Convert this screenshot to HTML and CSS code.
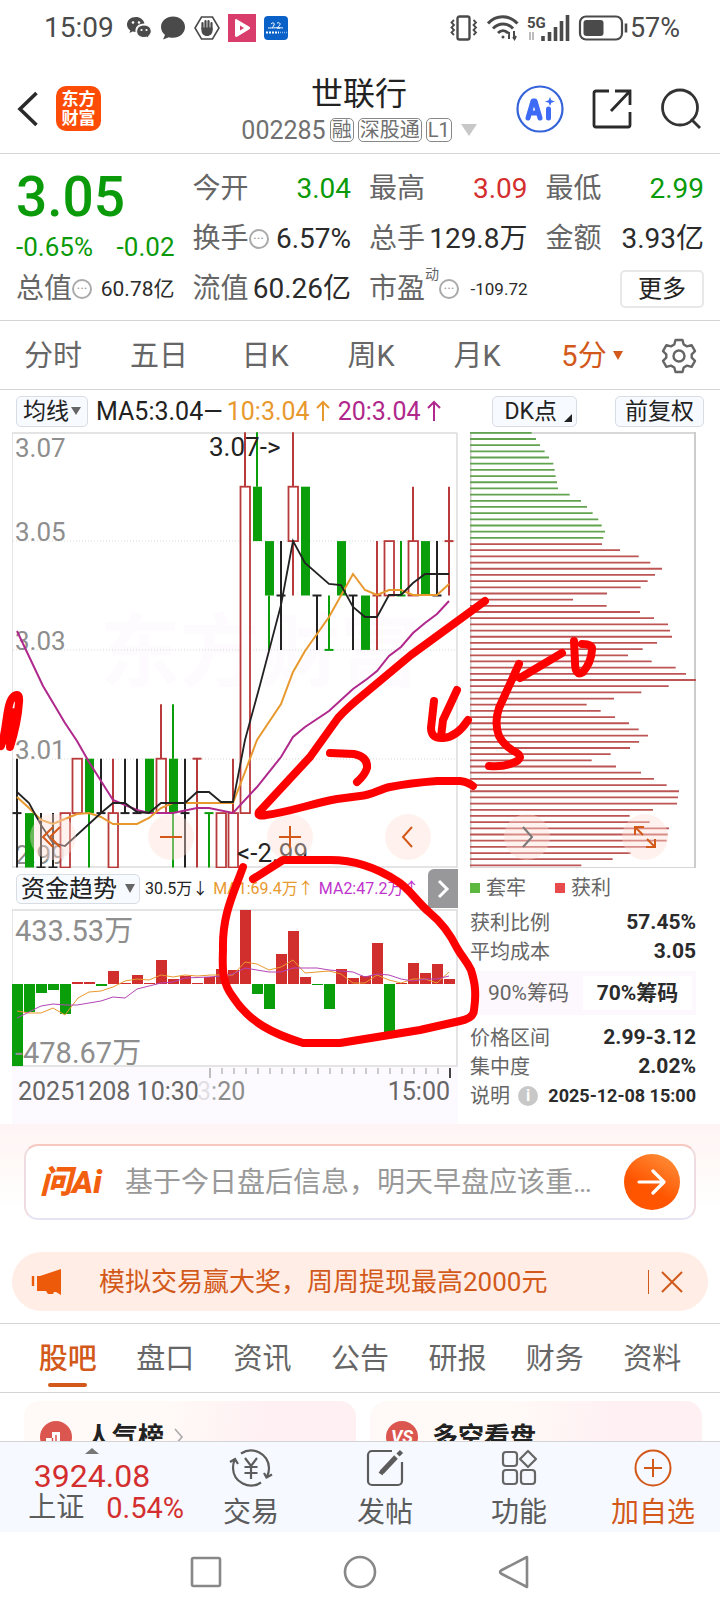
FILE: index.html
```html
<!DOCTYPE html>
<html lang="zh-CN">
<head>
<meta charset="utf-8">
<meta name="viewport" content="width=device-width, initial-scale=1">
<title>世联行 002285</title>
<link rel="stylesheet" href="styles.css">
</head>
<body>
<div class="status">
  <span class="clock">15:09</span>
  <svg width="26" height="26" viewBox="0 0 26 26" fill="#4a4a4a"><path d="M10 2C4.500 2 1 5.500 1 9.500c0 2.500 1.300 4.500 3.300 6L3.500 18l3-1.500c1 .3 2 .5 3 .5C9 12 12 8.500 18.500 8.500 17.500 4.500 14 2 10 2z"/><path d="M18 10c-4.300 0-7.300 2.800-7.300 6.300s3 6.200 7.300 6.200c.9 0 1.800-.2 2.600-.4l2.400 1.400-.7-2.200c1.700-1.200 2.900-3 2.900-5 0-3.500-3-6.300-7.200-6.300z" stroke="#fff" stroke-width="1"/><g fill="#fff"><circle cx="7" cy="7.500" r="1.300"/><circle cx="13" cy="7.500" r="1.300"/><circle cx="15.500" cy="15" r="1.100"/><circle cx="20.500" cy="15" r="1.100"/></g></svg>
  <svg width="26" height="26" viewBox="0 0 26 26" fill="#4a4a4a"><path d="M13 1.500C6.500 1.500 1 6 1 12c0 3.300 1.600 6 4 8L3 24.500l6-2.300c1.300.4 2.600.6 4 .6 6.700 0 12-4.800 12-10.800S19.700 1.500 13 1.500z"/></svg>
  <svg width="26" height="26" viewBox="0 0 26 26"><path d="M7.500 2h11L25 13l-6.500 11h-11L1 13z" fill="none" stroke="#4a4a4a" stroke-width="1.600"/><path d="M8.500 8v6M11.500 6v8M14.500 6v8M17.500 8v7" stroke="#4a4a4a" stroke-width="2.200" stroke-linecap="round"/><path d="M7.500 12.500h11v3c0 3-2 5.500-5.500 5.500s-5.500-2.500-5.500-5.500z" fill="#4a4a4a"/></svg>
  <svg width="28" height="28" viewBox="0 0 28 28"><rect width="28" height="28" fill="#d93d6c"/><path d="M9 5.500c-1.500-1-2 0-2 1.500v14c0 2 1 2.500 2.500 1.500L21 15.500c1.500-1 1.500-2 0-3z" fill="#fff"/><path d="M12 11.500l4 2.500-4 2.500z" fill="#d93d6c"/></svg>
  <svg width="24" height="24" viewBox="0 0 24 24"><rect width="24" height="24" rx="4" fill="#0a62c9"/><path d="M7 8c2-2 4-1 3 1s-2 3-1 3M13 7c3-1 4 1 2 3s-3 3 1 2M4 12c4 0 12-.5 15 0" fill="none" stroke="#fff"/><path d="M2 16.500h13" stroke="#fff" stroke-width="2" stroke-dasharray="2 1"/><path d="M16 16.500h7" stroke="#8bb8ee" stroke-width="1.500" stroke-dasharray="1 1"/></svg>
  <span class="grow"></span>
  <svg width="30" height="26" viewBox="0 0 30 26" fill="none" stroke="#4a4a4a"><rect x="8.500" y="1.500" width="12" height="23" rx="2" stroke-width="2.400"/><path d="M5 5L2.500 7.500 5 10l-2.500 2.500L5 15l-2.500 2.500L5 20M24.500 5L27 7.500 24.500 10l2.500 2.500L24.500 15l2.500 2.500L24.500 20" stroke-width="1.800"/></svg>
  <svg width="32" height="26" viewBox="0 0 32 26" fill="none" stroke="#4a4a4a" stroke-width="3"><path d="M1 8.500C9-.5 22-.5 30.500 8.500M6 13.500c6-6 14.500-6 20 0M11 18c3-3 7-3 10 0"/><circle cx="16" cy="22" r="1.500" fill="#4a4a4a" stroke="none"/><path d="M22 24v-7M21 19l1.500-2M27 16v8M26 22l1.500 2 1.500-3" stroke-width="2"/></svg>
  <svg class="signal" width="43" height="28" viewBox="0 -1 43 28"><text x="0" y="13" class="g5">5G</text><path d="M3 17v8M6 17v8" stroke="#bbb" stroke-width="2"/><path d="M16 21v5M22.500 17v9M28.500 12v14M34.500 6v20M40.500 0v26" stroke="#4a4a4a" stroke-width="3.600"/></svg>
  <svg width="50" height="26" viewBox="0 0 50 26" fill="none"><rect x="2" y="1.500" width="42" height="23" rx="6" stroke="#4a4a4a" stroke-width="2.200"/><rect x="5.500" y="5" width="20" height="16" rx="3" fill="#4a4a4a"/><path d="M48 8.500v9" stroke="#4a4a4a" stroke-width="2.600"/></svg>
  <span class="percent">57%</span>
</div>

<header class="head">
  <div class="head-side">
    <button class="plain" aria-label="返回"><svg width="24" height="40" viewBox="0 0 24 40"><path d="M20.500 4L4 20l16.500 16" fill="none" stroke="#2a2a2a" stroke-width="3.600"/></svg></button>
    <span class="logo">东方<br>财富</span>
  </div>
  <div class="head-mid">
    <h1>世联行</h1>
    <div class="code">002285<span class="badge">融</span><span class="badge">深股通</span><span class="badge">L1</span><svg width="16" height="12" viewBox="0 0 16 12"><path d="M0 0h16L8 12z" fill="#c8c8c8"/></svg></div>
  </div>
  <div class="head-side right">
    <button class="plain" aria-label="Ai"><svg width="48" height="48" viewBox="0 0 48 48"><circle cx="24" cy="24" r="22.500" fill="none" stroke="#3563d9" stroke-width="2.200"/><g fill="none" stroke="#3d6bf5" stroke-width="5" stroke-linejoin="round" stroke-linecap="round"><path d="M12 33l5-17h2l5 17M15 28h7"/><path d="M32.500 24v9"/></g><path d="M34 12l1.300 3.200L39 16.500l-3.700 1.300L34 21l-1.300-3.200-3.700-1.300 3.700-1.300z" fill="#3d6bf5"/></svg></button>
    <button class="plain" aria-label="分享"><svg width="40" height="40" viewBox="0 0 40 40" fill="none" stroke="#2a2a2a" stroke-width="2.800"><path d="M17 2H4a2 2 0 0 0-2 2v32a2 2 0 0 0 2 2h32a2 2 0 0 0 2-2V23M23 2h15v14M38 2L19 22"/></svg></button>
    <button class="plain" aria-label="搜索"><svg width="42" height="42" viewBox="0 0 42 42" fill="none" stroke="#333" stroke-width="2.800"><circle cx="20" cy="19.500" r="17.500"/><path d="M31 31l9 9"/></svg></button>
  </div>
</header>

<section class="quote">
  <div class="q-col">
    <strong class="price">3.05</strong>
    <div class="change"><span>-0.65%</span><span>-0.02</span></div>
    <div class="q"><span class="k">总值<i class="dots">···</i></span><span class="v mid">60.78亿</span></div>
  </div>
  <div class="q-col">
    <div class="q"><span class="k">今开</span><span class="v down">3.04</span></div>
    <div class="q"><span class="k">换手<i class="dots">···</i></span><span class="v">6.57%</span></div>
    <div class="q"><span class="k">流值</span><span class="v">60.26亿</span></div>
  </div>
  <div class="q-col">
    <div class="q"><span class="k">最高</span><span class="v up">3.09</span></div>
    <div class="q"><span class="k">总手</span><span class="v">129.8万</span></div>
    <div class="q"><span class="k">市盈<sup>动</sup><i class="dots">···</i></span><span class="v small">-109.72</span></div>
  </div>
  <div class="q-col">
    <div class="q"><span class="k">最低</span><span class="v down">2.99</span></div>
    <div class="q"><span class="k">金额</span><span class="v">3.93亿</span></div>
    <div class="q end"><button class="more">更多</button></div>
  </div>
</section>

<nav class="periods">
  <button class="plain">分时</button>
  <button class="plain">五日</button>
  <button class="plain">日K</button>
  <button class="plain">周K</button>
  <button class="plain">月K</button>
  <button class="plain on">5分<svg width="10" height="10" viewBox="0 0 10 10"><path d="M0 0h10L5 9z" fill="#d2591a"/></svg></button>
  <button class="plain" aria-label="设置"><svg width="36" height="36" viewBox="0 0 36 36" fill="none" stroke="#666" stroke-width="2.400" stroke-linejoin="round"><path d="M14.500 2h7l1.200 4.500 3.300 1.900 4.600-1.300 3.400 6-3.300 3.200v3.400l3.300 3.200-3.400 6-4.600-1.300-3.300 1.900L21.500 34h-7l-1.200-4.500-3.300-1.900-4.600 1.300-3.400-6 3.300-3.200v-3.400L2 13.100l3.400-6L10 8.400l3.300-1.900z"/><circle cx="18" cy="18" r="5.500"/></svg></button>
</nav>

<main class="market">
  <div class="tools">
    <button class="pill">均线<svg width="10" height="8" viewBox="0 0 10 8"><path d="M0 0h10L5 8z" fill="#666"/></svg></button>
    <span class="ma">MA5:3.04—</span><span class="ma or">10:3.04<svg width="14" height="22" viewBox="0 0 14 22"><path d="M7 21V2M1 8l6-6 6 6" fill="none" stroke="currentColor" stroke-width="2"/></svg></span><span class="ma pu">20:3.04<svg width="14" height="22" viewBox="0 0 14 22"><path d="M7 21V2M1 8l6-6 6 6" fill="none" stroke="currentColor" stroke-width="2"/></svg></span>
    <span class="grow"></span>
    <button class="pill dk">DK点<svg width="8" height="8" viewBox="0 0 8 8"><path d="M8 0v8H0z" fill="#222"/></svg></button>
    <button class="pill">前复权</button>
  </div>

  <div class="boards">
    <div class="board">
      <svg class="plot" id="candles" viewBox="12 432 446 436">
        <text x="100" y="680" class="mark">东方财富</text>
        <path d="M13 541h444M13 650h444M13 759h444" stroke="#d9d9d9" stroke-dasharray="1 2"/>
        <path d="M12 433h445M457 433v435M12 867h445M12 433v435" fill="none" stroke="#dcdcdc" stroke-width="1.500"/>
        <g class="axis"><text x="15" y="457">3.07</text><text x="15" y="541">3.05</text><text x="15" y="650">3.03</text><text x="15" y="759">3.01</text><text x="15" y="864">2.99</text></g>
        <g id="candle-layer"></g>
        <g fill="none" stroke-width="1.500">
          <path stroke="#b0288c" stroke-width="2" d="M17 631L43 686 65 723 77 741 89 762 113 800 137 810 149 813 173 813 197 808 209 808 233 813 257 787 281 757 293 737 305 727 329 711 353 689 367 679 377 671 389 656 401 647 413 633 425 623 437 614 449 601"/>
          <path stroke="#e8992e" stroke-width="2" d="M17 797L29 808 41 820 53 824 65 819 77 814 89 813 101 817 113 824 137 824 149 818 161 808 173 803 233 803 245 772 257 740 269 722 281 704 293 672 305 651 329 617 353 574 365 590 377 595 389 590 401 590 413 595 437 595 449 584"/>
          <path stroke="#222" stroke-width="1.800" d="M17 792L29 803 41 825 53 843 65 846 101 813 113 803 125 803 137 812 149 813 161 803 185 803 197 792 209 792 221 802 233 802 245 740 260 685 270 647 281 605 293 541 305 563 329 584 341 585 353 607 365 617 377 617 389 595 401 595 413 583 425 574 449 574"/>
        </g>
        <g class="axis dark"><text x="209" y="456">3.07-&gt;</text><text x="237" y="862">&lt;-2.99</text></g>
      </svg>
      <div class="fund">
        <button class="pill">资金趋势<svg width="10" height="9" viewBox="0 0 10 9"><path d="M0 0h10L5 9z" fill="#666"/></svg></button>
        <span>30.5万↓</span><span class="or">MA1:69.4万↑</span><span class="vi">MA2:47.2万↑</span>
        <button class="next" aria-label="下一个"><svg width="14" height="20" viewBox="0 0 14 20"><path d="M3 2l8 8-8 8" fill="none" stroke="#fff" stroke-width="3"/></svg></button>
      </div>
      <svg class="plot" viewBox="12 909 446 215">
        <rect x="12" y="1067" width="446" height="57" fill="#fdfaff"/>
        <path d="M12 910h445v156H12z" fill="none" stroke="#dcdcdc" stroke-width="1.500"/>
        <g id="fund-layer"></g>
        <g class="axis big"><text x="15" y="941">433.53万</text><text x="15" y="1063">-478.67万</text></g>
        <path fill="none" stroke="#e8992e" d="M17 1011L29 1013 41 1013 53 1008 65 1015 78 998 89 992 101 991 113 987 125 981 137 979 149 980 161 975 173 977 185 975 197 976 211 975 233 975 245 962 257 964 269 970 281 967 293 960 305 973 317 972 329 971 341 974 353 983 365 983 377 975 389 980 401 983 413 979 425 979 437 983 449 972"/>
        <path fill="none" stroke="#b545b5" d="M17 1018L29 1012 41 1006 53 1004 65 1005 77 1005 89 1003 101 1001 113 997 125 998 137 989 149 986 161 983 173 982 185 978 209 977 221 976 233 974 245 968 257 970 269 972 281 972 293 968 317 968 329 970 341 971 353 972 365 977 377 974 389 975 401 979 413 981 425 979 437 979 449 976"/>
        <path stroke="#999" d="M222 1068v6M234 1068v6M246 1068v6M258 1068v6M270 1068v6M282 1068v6M294 1068v6M306 1068v6M318 1068v6M330 1068v6M342 1068v6M354 1068v6M366 1068v6M378 1068v6M390 1068v6M402 1068v6M414 1068v6M426 1068v6M438 1068v6"/>
        <path stroke="#aaa" stroke-width="1.500" d="M210 1068v10"/><path stroke="#444" stroke-width="2" d="M450 1068v10"/>
        <g class="time"><text x="18" y="1100">20251208 10:30</text><text x="197" y="1100"><tspan fill="#e2dfe4">3</tspan><tspan fill="#aaa">:</tspan><tspan fill="#8c8c8c">20</tspan></text><text x="450" y="1100" text-anchor="end">15:00</text></g>
      </svg>
    </div>

    <div class="board">
      <svg class="plot" id="chips" viewBox="470 432 226 436">
        <path d="M470 433h226M470 868h226" stroke="#ccc" stroke-width="1.500"/>
        <path d="M470.500 432v436M695 432v436" stroke="#ccc" stroke-width="2"/>
        <g id="chip-layer"></g>
      </svg>
      <div class="legend"><span class="lock">套牢</span><span class="gain">获利</span></div>
      <dl class="stats"><div><dt>获利比例</dt><dd>57.45%</dd></div><div><dt>平均成本</dt><dd>3.05</dd></div></dl>
      <div class="seg"><button class="plain">90%筹码</button><button class="plain on">70%筹码</button></div>
      <dl class="stats"><div><dt>价格区间</dt><dd>2.99-3.12</dd></div><div><dt>集中度</dt><dd>2.02%</dd></div><div><dt>说明<i class="info">i</i></dt><dd class="date">2025-12-08 15:00</dd></div></dl>
    </div>
  </div>

  <div class="float">
    <button class="round" aria-label="快退"><svg width="24" height="24" viewBox="0 0 24 24"><path d="M12 2L2 12l10 10M19 2L9 12l10 10"/></svg></button>
    <button class="round" aria-label="缩小"><svg width="24" height="24" viewBox="0 0 24 24"><path d="M1 12h22"/></svg></button>
    <button class="round" aria-label="放大"><svg width="24" height="24" viewBox="0 0 24 24"><path d="M1 12h22M12 1v22"/></svg></button>
    <button class="round" aria-label="左移"><svg width="24" height="24" viewBox="0 0 24 24"><path d="M16 2L7 12l9 10"/></svg></button>
    <button class="round gray" aria-label="右移"><svg width="24" height="24" viewBox="0 0 24 24"><path d="M8 2l9 10-9 10"/></svg></button>
    <button class="round" aria-label="全屏"><svg width="24" height="24" viewBox="0 0 24 24"><path d="M2 10V2h9M2 2l8 8M22 14v8h-9M22 22l-8-8"/></svg></button>
  </div>

  <svg class="ink" viewBox="0 390 720 734" fill="none" stroke="#f00" stroke-width="8" stroke-linecap="round" stroke-linejoin="round">
    <path d="M1 746C7 732 6 708 11 700c4-7 9-7 8 2-1 16-3 26-9 45l5-22M10 744L12 712"/>
    <path d="M485 601L411 655 363 695Q347 708 338 718L310 757 259 812Q257 817 266 815C290 812 310 804 337 799L360 796C372 795 380 789 390 787Q410 783 437 781H460Q468 782 473 786"/>
    <path d="M330 753L354 754Q368 757 367 768 365 775 357 782"/>
    <path d="M434 701L431 728Q431 739 443 738 457 737 468 720M457 690L443 720 441 737"/>
    <path d="M519 664L499 708Q494 723 499 736 503 744 512 750 529 758 510 764 502 767 489 766"/>
    <path d="M520 678L562 653"/>
    <path d="M574 641L575 662Q575 677 583 672 591 663 592 650 593 644 582 644"/>
    <path d="M243 867C233 895 222 915 223 950 222 972 223 984 233 997 249 1022 273 1034 303 1043H340L377 1037 420 1030 460 1021Q474 1018 474 1010C477 990 474 980 471 970 466 960 462 957 457 948Q446 926 430 913C417 902 409 888 397 881Q365 860 330 860H283L253 879"/>
  </svg>
</main>

<section class="ask">
  <form class="ask-box">
    <label for="ask" class="ask-logo">问Ai</label>
    <input id="ask" type="text" placeholder="基于今日盘后信息，明天早盘应该重…">
    <button type="button" class="go" aria-label="发送"><svg width="30" height="26" viewBox="0 0 30 26"><path d="M2 13h24M16 2l11 11-11 11" fill="none" stroke="#fff" stroke-width="3.200" stroke-linecap="round" stroke-linejoin="round"/></svg></button>
  </form>
  <div class="notice">
    <svg width="32" height="28" viewBox="0 0 32 28"><path d="M2 8v10" stroke="#ec5a0a" stroke-width="2.400"/><path d="M6 8h3L30 1v26l-5-3h-2l-1 2h-5l-2-3H6z" fill="#ec5a0a"/></svg>
    <a href="#">模拟交易赢大奖，周周提现最高2000元</a>
    <span class="bar"></span>
    <button class="plain" aria-label="关闭"><svg width="22" height="22" viewBox="0 0 22 22"><path d="M1 1l20 20M21 1L1 21" stroke="#d2591a" stroke-width="2"/></svg></button>
  </div>
</section>

<nav class="topics">
  <a href="#" class="on">股吧</a><a href="#">盘口</a><a href="#">资讯</a><a href="#">公告</a><a href="#">研报</a><a href="#">财务</a><a href="#">资料</a>
</nav>

<section class="feed">
  <article class="card"><svg width="32" height="32" viewBox="0 0 32 32"><circle cx="16" cy="16" r="16" fill="#dc5650"/><path d="M6 24v-7h6v-6h8v9h6v4z" fill="#fff"/><path d="M16 14v8M12.500 17v7M19.500 20v4" stroke="#dc5650" stroke-width="1.500"/></svg><h2>人气榜</h2><svg width="10" height="18" viewBox="0 0 10 18"><path d="M1 1l7 8-7 8" fill="none" stroke="#aaa" stroke-width="1.600"/></svg></article>
  <article class="card"><span class="vs">VS</span><h2>多空看盘</h2></article>
</section>

<footer class="dock">
  <div class="index">
    <svg width="14" height="6" viewBox="0 0 14 6"><path d="M0 6l7-6 7 6z" fill="#777"/></svg>
    <span class="pts">3924.08</span>
    <div class="pct"><span>上证</span><b>0.54%</b></div>
  </div>
  <button class="act"><svg width="44" height="40" viewBox="0 0 44 40" fill="none" stroke="#5c5c5c" stroke-width="2.200"><path d="M12 5.500A18 18 0 0 1 40 20c0 3-.5 6-2 8.500M32 34.500A18 18 0 0 1 4 20c0-3 .5-6 2-8.500M1 14l5-3 3 5M35 25l2.500 4.500 5.500-3M16 10l6 8 6-8M22 18v13M15.500 19h13M15.500 25h13"/></svg>交易</button>
  <button class="act"><svg width="40" height="40" viewBox="0 0 40 40" fill="none" stroke="#5c5c5c" stroke-width="2.200"><path d="M27 3H7a4 4 0 0 0-4 4v26a4 4 0 0 0 4 4h26a4 4 0 0 0 4-4V14"/><path d="M17 24L31 9" stroke-width="5"/><path d="M33 7l3.500-3.500M15.500 26l2-3" stroke-width="4.500"/></svg>发帖</button>
  <button class="act"><svg width="38" height="40" viewBox="0 0 38 40" fill="none" stroke="#666" stroke-width="2.200"><rect x="3" y="4" width="14" height="14" rx="3"/><rect x="3" y="22" width="14" height="14" rx="3"/><rect x="21" y="22" width="14" height="14" rx="3"/><path d="M28 3l8 8-8 8-8-8z" stroke-linejoin="round"/></svg>功能</button>
  <button class="act on"><svg width="40" height="40" viewBox="0 0 40 40" fill="none" stroke="#d2591a" stroke-width="2"><circle cx="20" cy="20" r="17.500"/><path d="M11 20h18M20 11v18"/></svg>加自选</button>
</footer>

<div class="system">
  <button class="plain" aria-label="最近任务"><svg width="34" height="34" viewBox="0 0 34 34"><rect x="3" y="3" width="28" height="28" rx="1.500"/></svg></button>
  <button class="plain" aria-label="主页"><svg width="34" height="34" viewBox="0 0 34 34"><circle cx="17" cy="17" r="15"/></svg></button>
  <button class="plain" aria-label="返回上一页"><svg width="34" height="34" viewBox="0 0 34 34"><path d="M30 2v30L4 18.500q-2-1.500 0-3z" stroke-linejoin="round"/></svg></button>
</div>
<script src="script.js"></script>
</body>
</html>
```
FILE: styles.css
```css
* { box-sizing: border-box; }
body {
  margin: 0;
  height: 100vh;
  display: flex;
  flex-direction: column;
  background: #fff;
  color: #222;
  font-family: Roboto, "Noto Sans CJK SC", sans-serif;
  font-size: 28px;
  line-height: 1;
  overflow: hidden;
}
body > * { flex: none; }
svg { display: block; flex: none; }
button { font: inherit; color: inherit; cursor: pointer; }
a { color: inherit; text-decoration: none; }
i { font-style: normal; }
.plain { border: 0; background: none; padding: 0; display: flex; align-items: center; justify-content: center; white-space: nowrap; }
.grow { flex: 1; }
.or { color: #e8992e; }
.pu { color: #b0288c; }
.vi { color: #bd33cc; }

.status { display: flex; align-items: center; gap: 8px; height: 56px; padding: 0 40px 0 44px; color: #4a4a4a; }
.status .clock { margin-right: 4px; }
.status .percent { font-size: 27px; margin-left: -6px; }
.g5 { font-size: 15px; font-weight: 700; fill: #4a4a4a; }

.head { display: flex; align-items: center; justify-content: space-between; height: 98px; padding: 8px 18px 0 16px; border-bottom: 1px solid #d4d4d4; }
.head-side { display: flex; align-items: center; gap: 16px; width: 190px; }
.head-side.right { justify-content: flex-end; gap: 28px; }
.logo { display: flex; align-items: center; justify-content: center; width: 45px; height: 45px; border-radius: 10px; background: #fd4c05; color: #fff; font-size: 17px; line-height: 19px; font-weight: 700; }
.head-mid { display: flex; flex-direction: column; align-items: center; gap: 5px; }
h1 { margin: 0; font-size: 32px; line-height: 38px; font-weight: 400; }
.code { display: flex; align-items: center; gap: 4px; font-size: 25px; color: #707070; white-space: nowrap; }
.badge { border: 1px solid #888; border-radius: 5px; font-size: 20px; line-height: 22px; padding: 0 1px; }
.code svg { margin-left: 5px; }

.quote { display: grid; grid-template-columns: repeat(4, 1fr); gap: 18px; height: 167px; padding: 10px 16px 0; border-bottom: 1px solid #d4d4d4; }
.q-col { display: flex; flex-direction: column; }
.q { display: flex; align-items: center; justify-content: space-between; height: 50px; white-space: nowrap; }
.q.end { justify-content: flex-end; }
.k { display: flex; align-items: center; color: #666; }
.v { color: #2b2b2b; }
.v.up { color: #d42f2f; }
.v.down { color: #0a9a0a; }
.v.mid { font-size: 21px; }
.v.small { font-size: 17px; }
.k sup { font-size: 14px; align-self: flex-start; margin-top: -8px; }
.dots { display: flex; align-items: center; justify-content: center; width: 20px; height: 20px; border: 2px solid #aaa; border-radius: 50%; font-size: 14px; line-height: 14px; color: #999; }
.price { height: 66px; font-size: 55px; line-height: 66px; color: #0a9a0a; font-weight: 500; }
.change { display: flex; justify-content: space-between; align-items: center; height: 34px; font-size: 26px; color: #0a9a0a; }
.more { width: 84px; height: 38px; border: 2px solid #e8e8e8; border-radius: 5px; background: #fff; font-size: 24px; padding: 0; }

.periods { display: grid; grid-template-columns: repeat(5, 106fr) 124fr 50fr; height: 69px; padding: 2px 16px 0 0; border-bottom: 1px solid #d4d4d4; font-size: 29px; color: #666; }
.periods .on { color: #d2591a; gap: 6px; }

.market { position: relative; }
.tools { display: flex; align-items: center; height: 42px; padding: 0 16px; font-size: 25px; }
.pill { display: flex; align-items: center; height: 31px; border: 1px solid #d8dce3; border-radius: 5px; background: #f7faff; padding: 0 6px; gap: 2px; font-size: 23px; white-space: nowrap; }
.tools .pill:first-child { margin-right: 8px; }
.ma { display: flex; align-items: center; gap: 6px; }
.ma.or { margin-left: 4px; }
.ma.pu { margin-left: 8px; }
.tools .dk { margin-right: 38px; padding: 0 4px 0 11px; gap: 7px; }
.dk svg { align-self: flex-end; margin-bottom: 4px; }
.tools .pill:last-child { padding: 0 9px; }

.boards { display: grid; grid-template-columns: minmax(0, 446fr) minmax(0, 226fr); gap: 12px; padding: 0 24px 0 12px; }
.plot { width: 100%; height: auto; }
.axis { font-size: 26px; fill: #8e8e8e; }
.axis.dark { fill: #222; }
.axis.big { font-size: 29px; }
.time { font-size: 25px; fill: #666; }
.mark { font-size: 80px; font-weight: 700; fill: #fefbfe; }

.fund { display: flex; align-items: center; height: 41px; padding-left: 4px; gap: 5px; font-size: 16px; white-space: nowrap; }
.fund .pill { height: 30px; font-size: 24px; gap: 8px; padding: 0 4px; }
.fund .next { display: flex; align-items: center; justify-content: center; flex: none; width: 30px; height: 39px; margin-left: auto; border: 0; border-radius: 6px 0 0 0; background: #98979a; padding: 0; }

.legend { display: flex; gap: 29px; height: 40px; align-items: center; font-size: 20px; color: #666; }
.legend span { display: flex; align-items: center; gap: 6px; }
.legend span::before { content: ""; width: 10px; height: 10px; background: #5cb83f; }
.legend .gain::before { background: #e84b4b; }
.stats { margin: 0; font-size: 20px; color: #666; }
.stats div { display: flex; align-items: center; justify-content: space-between; height: 29px; white-space: nowrap; }
.stats dt { display: flex; align-items: center; gap: 8px; }
.stats dd { margin: 0; font-size: 21px; font-weight: 700; color: #2b2b2b; }
.stats .date { font-size: 18px; }
.info { display: flex; align-items: center; justify-content: center; width: 20px; height: 20px; border-radius: 50%; background: #c8c8c8; color: #fff; font-size: 16px; font-weight: 700; }
.seg { display: grid; grid-template-columns: 1fr 1fr; height: 44px; margin: 5px 0 8px; padding: 5px 4px; background: #fdf8fd; font-size: 21px; color: #666; }
.seg .on { background: #fff; font-weight: 700; color: #2b2b2b; }

.float { position: absolute; left: 30px; right: 52px; top: 424px; display: flex; justify-content: space-between; }
.round { display: flex; align-items: center; justify-content: center; width: 46px; height: 46px; border: 0; border-radius: 50%; padding: 0; background: rgba(255, 222, 212, .4); }
.round path { fill: none; stroke: #d2591a; stroke-width: 2; }
.round.gray path { stroke: #777; }
.ink { position: absolute; left: 0; top: 0; width: 100%; pointer-events: none; }

.ask { background: linear-gradient(#fff4f5, #fff9f8 40px, #fff 84px); padding: 20px 12px 12px; border-bottom: 1px solid #d4d4d4; }
.ask-box { display: flex; align-items: center; height: 76px; margin: 0 12px 32px; padding: 0 14px; border: 2px solid #e6e4f2; border-top-color: #f7c8c0; border-left-color: #f0dce0; border-right-color: #f0dce0; border-radius: 14px; background: #fff; }
.ask-logo { width: 85px; font-size: 32px; font-style: italic; font-weight: 900; color: #f2600f; white-space: nowrap; }
.ask-box input { flex: 1; min-width: 0; border: 0; padding: 0; background: none; font: inherit; outline: 0; }
.ask-box input::placeholder { color: #999; opacity: 1; }
.go { display: flex; align-items: center; justify-content: center; width: 56px; height: 56px; border: 0; border-radius: 50%; padding: 0; background: linear-gradient(210deg, #ff9540, #ff5500 60%); }
.notice { display: flex; align-items: center; height: 59px; padding: 0 25px 0 19px; border-radius: 30px; background: #ffede6; color: #d2591a; font-size: 26px; white-space: nowrap; }
.notice a { flex: 1; margin-left: 36px; }
.bar { width: 1px; height: 24px; margin-right: 12px; background: #d2591a; }

.topics { display: grid; grid-template-columns: repeat(7, 1fr); height: 69px; padding: 0 19px; border-bottom: 1px solid #d4d4d4; font-size: 29px; color: #666; }
.topics a { display: flex; flex-direction: column; align-items: center; padding-top: 21px; gap: 9px; }
.topics .on { color: #d2591a; font-weight: 500; }
.topics .on::after { content: ""; width: 39px; height: 4px; border-radius: 2px; background: #d2591a; }

.feed { flex: 1; min-height: 0; overflow: hidden; display: grid; grid-template-columns: 1fr 1fr; gap: 14px; padding: 8px 18px 0 24px; }
.card { display: flex; align-items: center; gap: 10px; height: 120px; padding: 0 16px 48px; border-radius: 16px; background: linear-gradient(100deg, #fffaf7 40%, #fff0f3 70%); }
.card h2 { margin: 0 0 0 4px; font-size: 26px; font-weight: 700; }
.vs { display: flex; align-items: center; justify-content: center; width: 32px; height: 32px; border-radius: 50%; background: #dc5650; color: #fff; font-size: 18px; font-weight: 700; font-style: italic; }

.dock { display: grid; grid-template-columns: 184fr repeat(4, 134fr); height: 91px; border-top: 1px solid #d4d4d4; background: #f6f9ff; color: #5c5c5c; }
.index { display: flex; flex-direction: column; align-items: center; padding-top: 6px; }
.pts { margin-top: 6px; font-size: 32px; color: #d42f2f; }
.pct { display: flex; align-self: flex-end; gap: 22px; margin-top: 2px; white-space: nowrap; }
.pct b { font-weight: 400; font-size: 29px; color: #d42f2f; }
.act { display: flex; flex-direction: column; align-items: center; gap: 10px; border: 0; background: none; padding: 6px 0 0; line-height: 30px; }
.act.on { color: #d2591a; }

.system { display: flex; justify-content: center; gap: 120px; height: 80px; background: #fff; }
.system svg { fill: none; stroke: #888; stroke-width: 2.6px; }
```
FILE: script.js
```js
// Each candle: [kind, high, low, open/close top, open/close bottom]; levels are cents above 2.99.
// Kinds: r = rising (hollow), g = falling (solid), k = unchanged.
const candles = [
  ['k', 2, 0, 1, 1], ['g', 1, 0, 1, 0], ['k', 1, 0, 0, 0], ['k', 1, 0, 0, 0], ['r', 1, 0, 1, 0],
  ['r', 2, 1, 2, 1], ['g', 2, 0, 2, 1], ['k', 2, 1, 1, 1], ['r', 2, 0, 1, 0], ['k', 2, 1, 1, 1],
  ['k', 2, 1, 1, 1], ['g', 2, 1, 2, 1], ['r', 3, 1, 2, 1], ['g', 3, 0, 2, 1], ['k', 2, 0, 1, 1],
  ['r', 2, 0, 2, 2], ['g', 1, 0, 1, 1], ['r', 1, 0, 1, 0], ['r', 2, 0, 1, 0], ['r', 8, 1, 7, 1],
  ['g', 8, 6, 7, 6], ['g', 6, 3, 6, 5], ['k', 6, 4, 5, 5], ['r', 8, 5, 7, 6], ['g', 7, 5, 7, 5],
  ['k', 5, 4, 5, 5], ['g', 5, 4, 4, 4], ['g', 6, 5, 6, 5], ['k', 5, 4, 5, 5], ['g', 5, 4, 5, 4],
  ['r', 6, 4, 5, 5], ['r', 6, 5, 6, 5], ['g', 6, 5, 5, 5], ['r', 7, 5, 6, 5], ['g', 6, 5, 6, 5],
  ['k', 6, 5, 5, 5], ['r', 7, 5, 6, 6]
];
candles[21][2] = 4;
const ink = { r: '#b83a3a', g: '#0a9e0a', k: '#222' };
const level = v => 867.5 - v * 54.4;

document.getElementById('candle-layer').innerHTML = candles.map(([kind, hi, lo, top, bottom], i) => {
  const x = 17 + i * 12;
  const c = ink[kind];
  const line = (a, b) => a === b ? '' : `<path d="M${x} ${level(a)}V${level(b)}" stroke="${c}" stroke-width="2"/>`;
  if (top === bottom) {
    return line(hi, lo) + `<path d="M${x - 4.5} ${level(top)}h9" stroke="${c}" stroke-width="2"/>`;
  }
  const h = level(bottom) - level(top);
  const body = kind === 'r'
    ? `<rect x="${x - 4.5}" y="${level(top)}" width="9.5" height="${h}" fill="#fff" fill-opacity=".8" stroke="${c}" stroke-width="1.8"/>`
    : `<rect x="${x - 4}" y="${level(top)}" width="9" height="${h}" fill="${c}"/>`;
  return line(hi, top) + line(bottom, lo) + body;
}).join('');

const funds = [-82, -28, -9, -6, -30, 2, 2, -2, 13, 1, 9, 1, 24, 5, 8, 1, 7, 15, 14, 74, -10, -25, 30, 53, 7, -1, -25, 15, 6, 8, 41, -48, 1, 21, 11, 20, 5];
document.getElementById('fund-layer').innerHTML = funds.map((v, i) =>
  `<rect x="${12 + i * 12}" y="${v > 0 ? 984 - v : 984}" width="11" height="${Math.abs(v)}" fill="${v > 0 ? '#d12e2e' : '#0a9e0a'}"/>`
).join('');

// Chip counts per price step, top to bottom; the first 18 are above the current price.
const chips = [185, 198, 210, 224, 237, 250, 254, 257, 261, 264, 299, 333, 351, 368, 385, 395, 405, 400,
  396, 450, 506, 541, 576, 555, 533, 512, 411, 309, 410, 510, 552, 594, 600, 606, 561, 518, 474, 545, 617, 648, 678,
  596, 514, 432, 350, 392, 435, 477, 506, 534, 507, 480, 422, 365, 438, 513, 552, 590, 627, 624, 621, 549, 479, 539, 597, 593, 590, 536, 482, 428, 334];
document.getElementById('chip-layer').innerHTML = chips.map((n, i) =>
  `<path d="M470 ${432.8 + i * 6.18}h${n / 3}" stroke="${i < 18 ? '#62a34f' : '#bd5555'}" stroke-width="1.8"/>`
).join('');
```
